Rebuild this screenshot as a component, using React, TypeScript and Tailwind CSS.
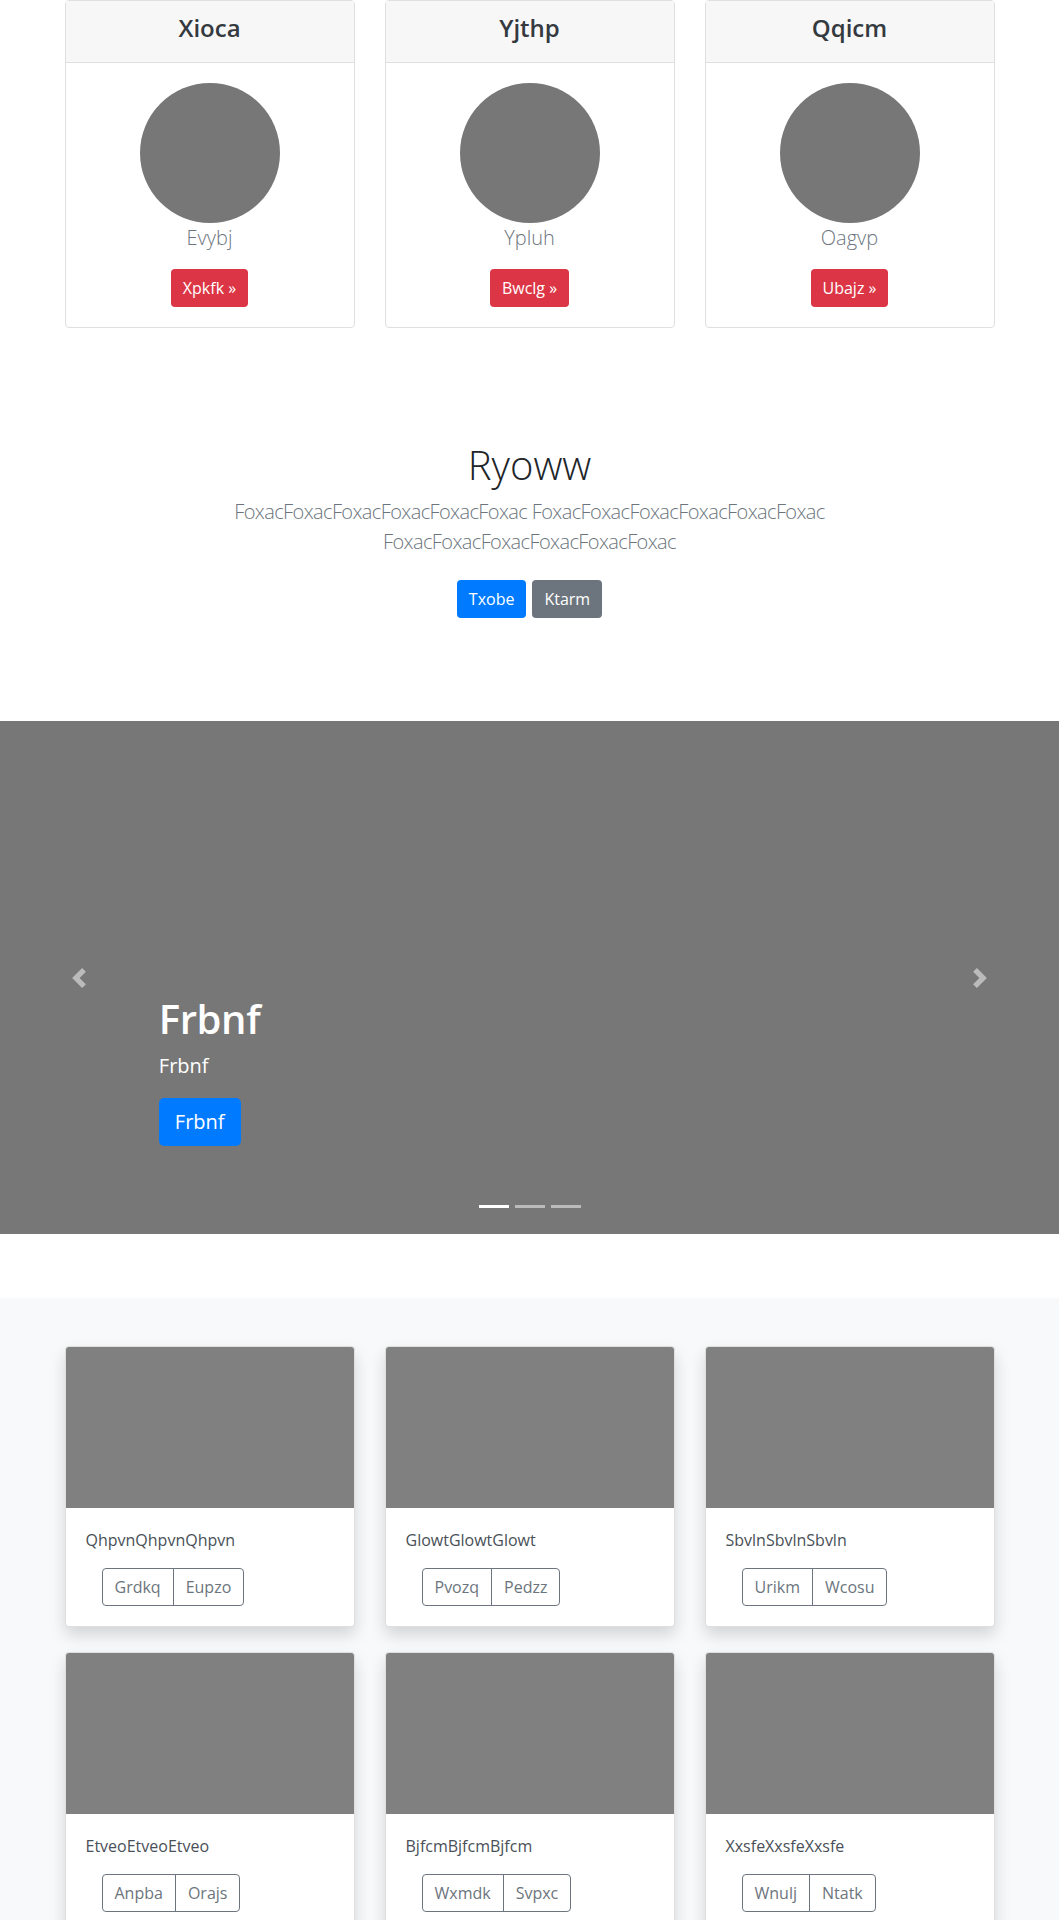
const topCards = [
  { title: 'Xioca', name: 'Evybj', action: 'Xpkfk' },
  { title: 'Yjthp', name: 'Ypluh', action: 'Bwclg' },
  { title: 'Qqicm', name: 'Oagvp', action: 'Ubajz' },
]

const albumCards = [
  { text: 'QhpvnQhpvnQhpvn', a: 'Grdkq', b: 'Eupzo' },
  { text: 'GlowtGlowtGlowt', a: 'Pvozq', b: 'Pedzz' },
  { text: 'SbvlnSbvlnSbvln', a: 'Urikm', b: 'Wcosu' },
  { text: 'EtveoEtveoEtveo', a: 'Anpba', b: 'Orajs' },
  { text: 'BjfcmBjfcmBjfcm', a: 'Wxmdk', b: 'Svpxc' },
  { text: 'XxsfeXxsfeXxsfe', a: 'Wnulj', b: 'Ntatk' },
]

function ChevronLeft() {
  return (
    <svg width="20" height="20" viewBox="0 0 8 8" fill="#fff">
      <path d="M5.25 0l-4 4 4 4 1.5-1.5-2.5-2.5 2.5-2.5-1.5-1.5z" />
    </svg>
  )
}

function ChevronRight() {
  return (
    <svg width="20" height="20" viewBox="0 0 8 8" fill="#fff">
      <path d="M2.75 0l-1.5 1.5 2.5 2.5-2.5 2.5 1.5 1.5 4-4-4-4z" />
    </svg>
  )
}

export default function App() {
  return (
    <div className="min-h-screen bg-white font-['Open_Sans','Noto_Sans',sans-serif] text-[#212529]">
      {/* Top cards */}
      <div className="mx-auto max-w-[960px] px-[15px]">
        <div className="grid grid-cols-3 gap-[30px]">
          {topCards.map((c) => (
            <div key={c.title} className="rounded-[4px] border border-[#dfdfdf] bg-white">
              <div className="h-[62px] border-b border-[#dfdfdf] bg-[#f7f7f7] pt-[13px] text-center">
                <h4 className="text-2xl leading-[1.2] font-semibold text-[#343a40]">{c.title}</h4>
              </div>
              <div className="p-5 text-center">
                <div className="mx-auto h-[140px] w-[140px] rounded-full bg-[#777777]" />
                <p className="mb-4 text-[20px] leading-[30px] font-light text-[#6c757d]">{c.name}</p>
                <button className="inline-flex h-[38px] items-center rounded-[4px] bg-[#dc3545] px-3 text-base text-white">
                  {c.action} &raquo;
                </button>
              </div>
            </div>
          ))}
        </div>
      </div>

      {/* Jumbotron */}
      <section className="pt-[113px] pb-[103px] text-center">
        <div className="mx-auto max-w-[680px] px-[15px]">
          <h1 className="mb-2 text-[40px] leading-[48px] font-light text-[#212529]">Ryoww</h1>
          <p className="mb-[23px] text-[20px] leading-[30px] font-light tracking-[-0.03em] text-[#6c757d]">
            FoxacFoxacFoxacFoxacFoxacFoxac FoxacFoxacFoxacFoxacFoxacFoxac FoxacFoxacFoxacFoxacFoxacFoxac
          </p>
          <div className="flex justify-center gap-[6px]">
            <button className="h-[38px] rounded-[4px] bg-[#007bff] px-3 text-base text-white">Txobe</button>
            <button className="h-[38px] rounded-[4px] bg-[#6c757d] px-3 text-base text-white">Ktarm</button>
          </div>
        </div>
      </section>

      {/* Carousel */}
      <div className="relative mb-16 h-[513px] overflow-hidden bg-[#777777]">
        <div className="absolute top-0 bottom-0 left-0 flex w-[15%] items-center justify-center opacity-50">
          <ChevronLeft />
        </div>
        <div className="absolute top-0 right-0 bottom-0 flex w-[15%] items-center justify-center opacity-50">
          <ChevronRight />
        </div>
        <div className="absolute right-[15%] bottom-[88px] left-[15%] text-left text-white">
          <h1 className="mb-2 text-[40px] leading-[48px] font-semibold tracking-[-0.01em]">Frbnf</h1>
          <p className="mb-[17px] text-[20px] leading-[30px]">Frbnf</p>
          <button className="h-[48px] rounded-[5px] bg-[#007bff] px-4 text-[20px] text-white">Frbnf</button>
        </div>
        <div className="absolute bottom-[26px] left-0 right-0 flex justify-center gap-[6px]">
          <span className="h-[3px] w-[30px] bg-white" />
          <span className="h-[3px] w-[30px] bg-white/50" />
          <span className="h-[3px] w-[30px] bg-white/50" />
        </div>
      </div>

      {/* Album */}
      <div className="bg-[#f8f9fa] py-12">
        <div className="mx-auto max-w-[960px] px-[15px]">
          <div className="grid grid-cols-3 gap-x-[30px] gap-y-[25px]">
            {albumCards.map((c) => (
              <div
                key={c.text}
                className="overflow-hidden rounded-[4px] border border-black/[.125] bg-white shadow-[0_8px_16px_rgba(0,0,0,0.15)]"
              >
                <div className="h-[161px] bg-[#808080]" />
                <div className="p-5">
                  <p className="mb-4 text-base leading-6 text-[#495057]">{c.text}</p>
                  <div className="ml-4 inline-flex h-[38px] rounded-[4px] border border-[#6c757d] text-base text-[#6c757d]">
                    <button className="px-3">{c.a}</button>
                    <button className="border-l border-[#6c757d] px-3">{c.b}</button>
                  </div>
                </div>
              </div>
            ))}
          </div>
        </div>
      </div>
    </div>
  )
}
